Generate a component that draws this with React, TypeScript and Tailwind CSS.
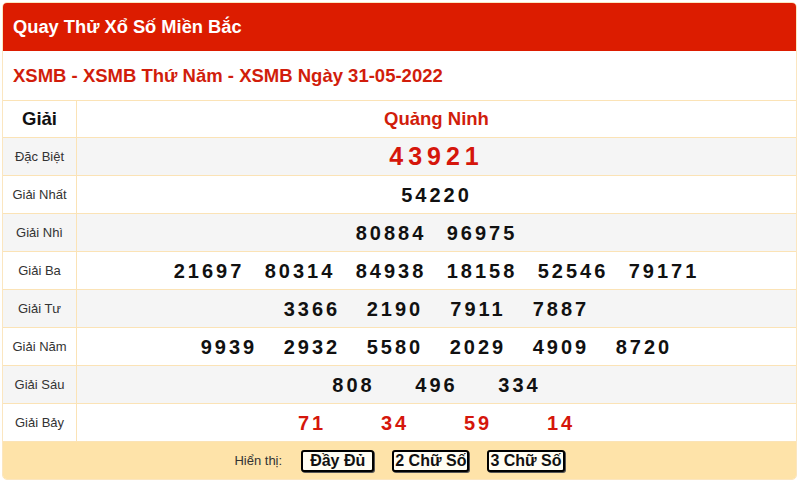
import React from "react";

type Row = {
  label: string;
  nums: string[];
  kind?: "special" | "red";
};

const rows: Row[] = [
  { label: "Đặc Biệt", nums: ["43921"], kind: "special" },
  { label: "Giải Nhất", nums: ["54220"] },
  { label: "Giải Nhì", nums: ["80884", "96975"] },
  { label: "Giải Ba", nums: ["21697", "80314", "84938", "18158", "52546", "79171"] },
  { label: "Giải Tư", nums: ["3366", "2190", "7911", "7887"] },
  { label: "Giải Năm", nums: ["9939", "2932", "5580", "2029", "4909", "8720"] },
  { label: "Giải Sáu", nums: ["808", "496", "334"] },
  { label: "Giải Bảy", nums: ["71", "34", "59", "14"], kind: "red" },
];

function NumberCell({ row }: { row: Row }) {
  if (row.kind === "special") {
    return (
      <span className="text-[25px] font-bold tracking-[5px] text-[#d5160b] leading-none">
        {row.nums[0]}
      </span>
    );
  }
  return (
    <div className="flex items-center justify-center">
      {row.nums.map((n, i) => (
        <span
          key={i}
          className={
            (n.length === 5 ? "w-[91px] " : "w-[83px] ") +
            (row.kind === "red" ? "text-[#d5160b] " : "text-[#111] ") +
            "text-center text-[20px] font-bold tracking-[3px] leading-none"
          }
        >
          {n}
        </span>
      ))}
    </div>
  );
}

export default function App() {
  return (
    <main className="h-[480px] w-[800px] bg-white p-[2px] pr-[3px] font-['Liberation_Sans',Arial,sans-serif]">
      <div className="overflow-hidden rounded-[5px] border border-[#fbe6c0] bg-white">
        <div className="flex h-[48px] items-center bg-[#dc1c00] px-[10px]">
          <h1 className="text-[18.3px] font-bold text-white">Quay Thử Xổ Số Miền Bắc</h1>
        </div>

        <div className="flex h-[50px] items-center border-b border-[#fbe3b6] px-[10px]">
          <h2 className="text-[18.5px] font-bold text-[#d11d0b]">
            XSMB - XSMB Thứ Năm - XSMB Ngày 31-05-2022
          </h2>
        </div>

        <div className="grid grid-cols-[74px_1fr]">
          <div className="flex h-[37px] items-center justify-center border-b border-r border-[#fbe3b6] text-[18.5px] font-bold text-[#111]">
            Giải
          </div>
          <div className="flex h-[37px] items-center justify-center border-b border-[#fbe3b6] text-[18.5px] font-bold text-[#d11d0b]">
            Quảng Ninh
          </div>

          {rows.map((row, i) => {
            const bg = i % 2 === 0 ? "bg-[#f5f5f5]" : "bg-white";
            return (
              <React.Fragment key={row.label}>
                <div
                  className={`flex h-[38px] items-center justify-center border-b border-r border-[#fbe3b6] text-[13px] text-[#333] ${bg}`}
                >
                  {row.label}
                </div>
                <div
                  className={`flex h-[38px] items-center justify-center border-b border-[#fbe3b6] ${bg}`}
                >
                  <NumberCell row={row} />
                </div>
              </React.Fragment>
            );
          })}
        </div>

        <div className="flex h-[37px] items-center justify-center gap-[18px] bg-[#fee3a9]">
          <span className="mr-[1px] text-[13px] text-[#333]">Hiển thị:</span>
          <button className="h-[22px] rounded-[3px] border-2 border-black bg-[#fffdf3] px-[7px] text-[16px] font-bold leading-none text-[#111] shadow-[1px_1px_0_#555]">
            Đầy Đủ
          </button>
          <button className="h-[22px] rounded-[3px] border-2 border-black bg-[#fffdf3] px-[1px] text-[16px] font-bold leading-none text-[#111] shadow-[1px_1px_0_#555]">
            2 Chữ Số
          </button>
          <button className="h-[22px] rounded-[3px] border-2 border-black bg-[#fffdf3] px-[1px] text-[16px] font-bold leading-none text-[#111] shadow-[1px_1px_0_#555]">
            3 Chữ Số
          </button>
        </div>
      </div>
    </main>
  );
}
